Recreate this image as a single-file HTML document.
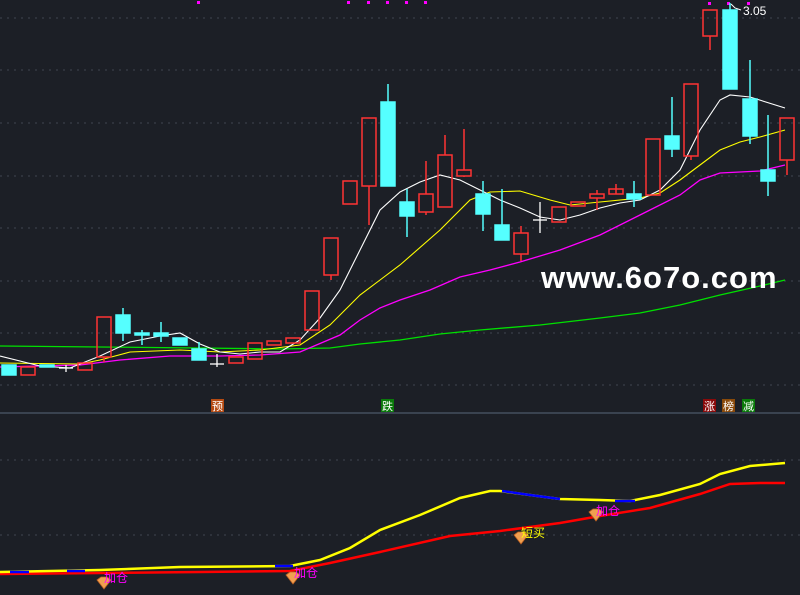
<!DOCTYPE html>
<html><head><meta charset="utf-8"><style>
html,body{margin:0;padding:0;background:#1c1f26;width:800px;height:595px;overflow:hidden}
svg{display:block}
</style></head><body>
<svg width="800" height="595" viewBox="0 0 800 595" xmlns="http://www.w3.org/2000/svg" font-family="Liberation Sans, Noto Sans CJK SC, sans-serif">
<rect width="800" height="595" fill="#1c1f26"/>
<g stroke="#3f4550" stroke-dasharray="2,5" stroke-width="1">
<line x1="0" y1="18" x2="800" y2="18"/><line x1="0" y1="70" x2="800" y2="70"/><line x1="0" y1="123" x2="800" y2="123"/><line x1="0" y1="176" x2="800" y2="176"/><line x1="0" y1="228" x2="800" y2="228"/><line x1="0" y1="281" x2="800" y2="281"/><line x1="0" y1="333" x2="800" y2="333"/><line x1="0" y1="385" x2="800" y2="385"/>
<line x1="0" y1="460" x2="800" y2="460"/><line x1="0" y1="535" x2="800" y2="535"/>
</g>
<line x1="0" y1="413" x2="800" y2="413" stroke="#3a4350" stroke-width="2"/>
<g fill="#ff00ff"><rect x="197" y="1" width="3" height="3"/><rect x="347" y="1" width="3" height="3"/><rect x="367" y="1" width="3" height="3"/><rect x="386" y="1" width="3" height="3"/><rect x="405" y="1" width="3" height="3"/><rect x="424" y="1" width="3" height="3"/><rect x="708" y="2" width="3" height="3"/><rect x="727" y="2" width="3" height="3"/><rect x="747" y="2" width="3" height="3"/></g>
<!-- MA lines -->
<polyline fill="none" stroke="#00e000" stroke-width="1.3" points="0,346 100,347 200,348 280,349 330,348 360,344 400,340 440,334 480,330 540,325 600,318 640,313 680,305 720,295 760,286 785,280"/>
<polyline fill="none" stroke="#ff00ff" stroke-width="1.3" points="0,367 80,365 120,360 170,356 220,356 260,355 300,352 340,335 360,320 380,308 400,300 430,290 460,277 490,270 520,262 560,250 600,235 640,215 680,195 700,180 720,173 760,171 785,165"/>
<polyline fill="none" stroke="#ffff00" stroke-width="1.1" points="0,363 80,364 100,360 130,352 180,350 220,352 260,350 300,345 330,325 360,295 400,265 440,230 470,200 490,192 520,191 550,200 570,205 600,202 640,198 660,193 680,180 700,165 720,150 740,142 760,137 785,130"/>
<polyline fill="none" stroke="#ffffff" stroke-width="1.1" points="0,356 40,366 70,368 100,356 130,342 160,336 180,333 200,344 220,352 240,354 260,352 280,352 300,340 320,318 340,290 360,250 380,210 400,192 420,182 440,175 460,180 480,190 500,200 520,208 540,217 560,220 580,215 600,208 620,203 640,200 660,190 680,170 700,130 720,100 730,95 750,97 785,108"/>
<!-- candles -->
<g stroke-width="1.5">
<g stroke="#ff3333" fill="none">
<rect x="21" y="367" width="14" height="8"/><rect x="78" y="363" width="14" height="7"/>
<line x1="104" y1="357" x2="104" y2="362"/><rect x="97" y="317" width="14" height="40"/>
<rect x="229" y="357" width="14" height="6"/><rect x="248" y="343" width="14" height="16"/><rect x="267" y="341" width="14" height="4"/><rect x="286" y="338" width="14" height="5"/><rect x="305" y="291" width="14" height="39"/>
<line x1="331" y1="275" x2="331" y2="280"/><rect x="324" y="238" width="14" height="37"/>
<rect x="343" y="181" width="14" height="23"/>
<line x1="369" y1="186" x2="369" y2="225"/><rect x="362" y="118" width="14" height="68"/>
<line x1="426" y1="161" x2="426" y2="215"/><rect x="419" y="194" width="14" height="18" fill="#1c1f26"/>
<line x1="445" y1="135" x2="445" y2="155"/><rect x="438" y="155" width="14" height="52"/>
<line x1="464" y1="129" x2="464" y2="177"/><rect x="457" y="170" width="14" height="6" fill="#1c1f26"/>
<line x1="521" y1="226" x2="521" y2="261"/><rect x="514" y="233" width="14" height="21" fill="#1c1f26"/>
<rect x="552" y="207" width="14" height="15"/><rect x="571" y="202" width="14" height="4"/>
<line x1="597" y1="190" x2="597" y2="210"/><rect x="590" y="194" width="14" height="4" fill="#1c1f26"/>
<line x1="616" y1="184" x2="616" y2="194"/><rect x="609" y="189" width="14" height="5"/>
<rect x="646" y="139" width="14" height="56"/>
<line x1="691" y1="156" x2="691" y2="160"/><rect x="684" y="84" width="14" height="72"/>
<line x1="710" y1="36" x2="710" y2="50"/><rect x="703" y="10" width="14" height="26"/>
<line x1="787" y1="160" x2="787" y2="175"/><rect x="780" y="118" width="14" height="42"/>
</g>
<g stroke="#55ffff" fill="#55ffff">
<rect x="2" y="365" width="14" height="10"/><rect x="40" y="365" width="14" height="2"/>
<line x1="123" y1="308" x2="123" y2="341"/><rect x="116" y="315" width="14" height="18"/>
<line x1="142" y1="330" x2="142" y2="345"/><rect x="135" y="333" width="14" height="2"/>
<line x1="161" y1="322" x2="161" y2="342"/><rect x="154" y="333" width="14" height="3"/>
<rect x="173" y="338" width="14" height="7"/>
<line x1="199" y1="342" x2="199" y2="349"/><rect x="192" y="349" width="14" height="11"/>
<line x1="388" y1="84" x2="388" y2="102"/><rect x="381" y="102" width="14" height="84"/>
<line x1="407" y1="189" x2="407" y2="237"/><rect x="400" y="202" width="14" height="14"/>
<line x1="483" y1="181" x2="483" y2="231"/><rect x="476" y="194" width="14" height="20"/>
<line x1="502" y1="189" x2="502" y2="225"/><rect x="495" y="225" width="14" height="15"/>
<line x1="634" y1="181" x2="634" y2="207"/><rect x="627" y="194" width="14" height="5"/>
<line x1="672" y1="97" x2="672" y2="157"/><rect x="665" y="136" width="14" height="13"/>
<line x1="730" y1="3" x2="730" y2="10"/><rect x="723" y="10" width="14" height="79"/>
<line x1="750" y1="60" x2="750" y2="144"/><rect x="743" y="99" width="14" height="37"/>
<line x1="768" y1="115" x2="768" y2="196"/><rect x="761" y="170" width="14" height="11"/>
</g>
<g stroke="#ffffff" stroke-width="1.3">
<line x1="59" y1="368" x2="73" y2="368"/><line x1="66" y1="365" x2="66" y2="372"/>
<line x1="210" y1="364" x2="224" y2="364"/><line x1="217" y1="354" x2="217" y2="367"/>
<line x1="533" y1="220" x2="547" y2="220"/><line x1="540" y1="202" x2="540" y2="233"/>
</g>
</g>
<polyline fill="none" stroke="#ffffff" stroke-width="1" points="731,4 735,8 741,10"/>
<text x="743" y="15" fill="#ffffff" font-size="12">3.05</text>
<text x="541" y="288" fill="#ffffff" font-size="31" font-weight="bold" letter-spacing="1">www.6o7o.com</text>
<!-- labels -->
<g font-size="11" fill="#ffffff" text-anchor="middle">
<rect x="211" y="399" width="13" height="13" fill="#b54a12"/><text x="217.5" y="410">预</text>
<rect x="381" y="399" width="13" height="13" fill="#0a7a0a"/><text x="387.5" y="410">跌</text>
<rect x="703" y="399" width="13" height="13" fill="#8a0a0a"/><text x="709.5" y="410">涨</text>
<rect x="722" y="399" width="13" height="13" fill="#8a4a0a"/><text x="728.5" y="410">榜</text>
<rect x="742" y="399" width="13" height="13" fill="#0a7a0a"/><text x="748.5" y="410">减</text>
</g>
<!-- lower panel -->
<polyline fill="none" stroke="#ff0000" stroke-width="2.5" points="0,574 100,573 200,572 290,571 330,563 380,552 450,536 500,531 560,523 600,516 650,508 700,494 730,484 760,483 785,483"/>
<polyline fill="none" stroke="#ffff00" stroke-width="2.5" points="0,572 100,570 180,567 290,566 320,560 350,548 380,530 420,515 460,498 490,491 500,491 530,495 560,499 600,500 630,501 660,495 700,484 720,474 750,466 785,463"/>
<g stroke="#0000ff" stroke-width="2.5" fill="none">
<line x1="10" y1="572" x2="29" y2="572"/><line x1="67" y1="571" x2="85" y2="571"/><line x1="275" y1="566" x2="293" y2="566"/>
<polyline points="502,491 530,495 560,499"/><line x1="615" y1="501" x2="635" y2="501"/>
</g>
<g>
<g transform="translate(104,584)"><polygon points="-7,-4 -3,-7 3,-7 7,-4 0,5" fill="#f0a050" stroke="#c06020" stroke-width="0.8"/></g>
<g transform="translate(293,579)"><polygon points="-7,-4 -3,-7 3,-7 7,-4 0,5" fill="#f0a050" stroke="#c06020" stroke-width="0.8"/></g>
<g transform="translate(521,539)"><polygon points="-7,-4 -3,-7 3,-7 7,-4 0,5" fill="#f0a050" stroke="#c06020" stroke-width="0.8"/></g>
<g transform="translate(596,516)"><polygon points="-7,-4 -3,-7 3,-7 7,-4 0,5" fill="#f0a050" stroke="#c06020" stroke-width="0.8"/></g>
</g>
<g font-size="12">
<text x="104" y="582" fill="#ff00ff">加仓</text>
<text x="294" y="577" fill="#ff00ff">加仓</text>
<text x="521" y="537" fill="#ffff00">短买</text>
<text x="596" y="515" fill="#ff00ff">加仓</text>
</g>
</svg>
</body></html>
